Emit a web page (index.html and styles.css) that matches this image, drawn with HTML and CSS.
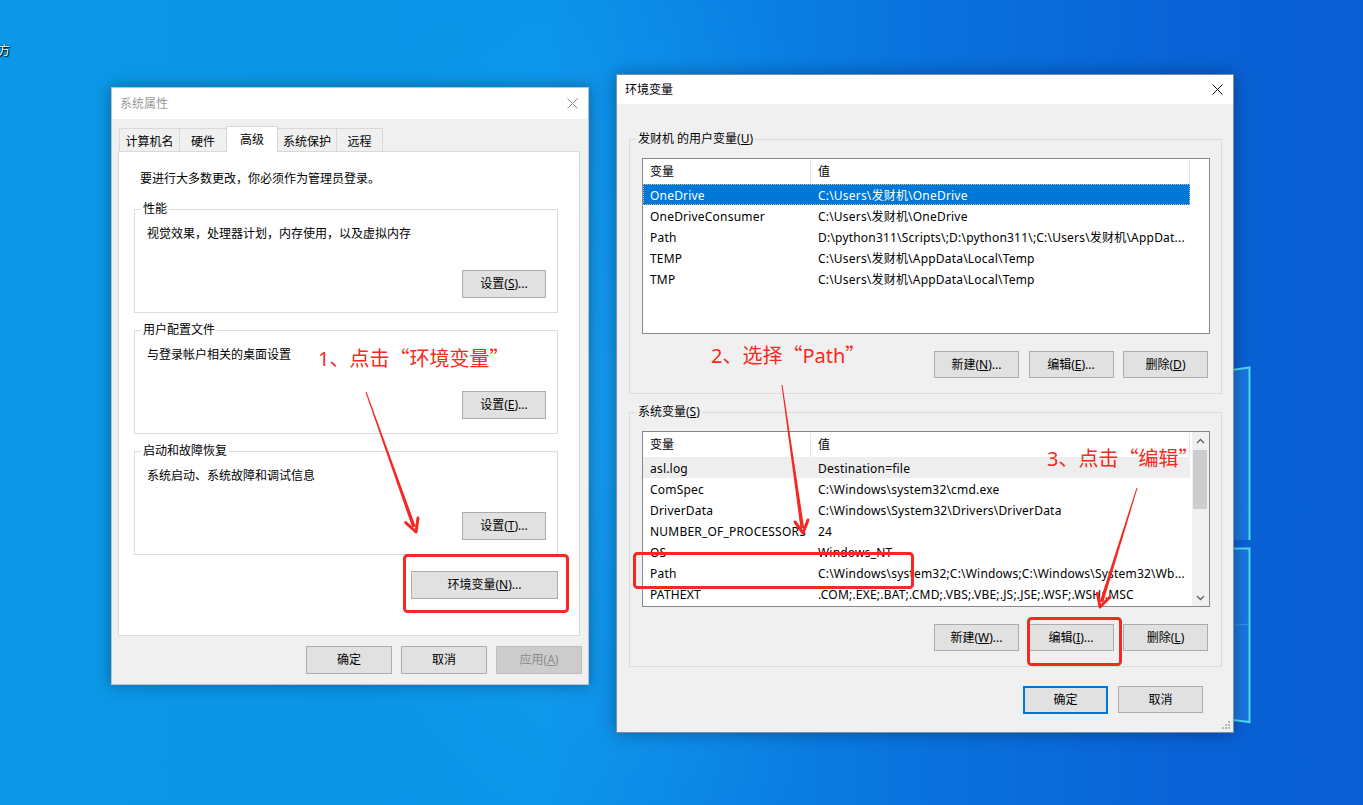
FILE: index.html
```html
<!DOCTYPE html>
<html lang="zh-CN">
<head>
<meta charset="utf-8">
<title>环境变量</title>
<link rel="stylesheet" href="styles.css">
</head>
<body>
<div class="desk-icon">方</div>

<svg class="logo" width="40" height="380" viewBox="1225 360 40 380">
  <polygon points="1225,371 1250,367 1250,540 1225,540" fill="rgba(70,175,250,0.28)"/>
  <polygon points="1225,548 1250,548 1250,722 1225,719" fill="rgba(70,175,250,0.28)"/>
  <polyline points="1225,371 1249.5,367.5 1249.5,540" fill="none" stroke="#52d8f4" stroke-width="2"/>
  <polyline points="1225,548.5 1249.5,548.5 1249.5,722 1225,719" fill="none" stroke="#52d8f4" stroke-width="2"/>
  <line x1="1225" y1="626" x2="1249" y2="624" stroke="rgba(120,220,255,0.35)" stroke-width="1"/>
</svg>

<!-- 系统属性 -->
<div class="win win-sys">
  <div class="titlebar inactive">
    <span class="title">系统属性</span>
    <svg class="close" width="11" height="11" viewBox="0 0 11 11"><path d="M0.5 0.5 L10.5 10.5 M10.5 0.5 L0.5 10.5" stroke="#8a8a8a" stroke-width="1"/></svg>
  </div>
  <div class="sys-body">
    <div class="tabs">
      <div class="tab t1">计算机名</div>
      <div class="tab t2">硬件</div>
      <div class="tab t3 active">高级</div>
      <div class="tab t4">系统保护</div>
      <div class="tab t5">远程</div>
    </div>
    <div class="panel">
      <p class="intro">要进行大多数更改，你必须作为管理员登录。</p>
      <fieldset class="group g-sys">
        <legend>性能</legend>
        <div class="gbody">
          <p class="desc">视觉效果，处理器计划，内存使用，以及虚拟内存</p>
          <div class="brow"><button class="btn">设置(<u>S</u>)...</button></div>
        </div>
      </fieldset>
      <fieldset class="group g-sys">
        <legend>用户配置文件</legend>
        <div class="gbody">
          <p class="desc">与登录帐户相关的桌面设置</p>
          <div class="brow"><button class="btn">设置(<u>E</u>)...</button></div>
        </div>
      </fieldset>
      <fieldset class="group g-sys">
        <legend>启动和故障恢复</legend>
        <div class="gbody">
          <p class="desc">系统启动、系统故障和调试信息</p>
          <div class="brow"><button class="btn">设置(<u>T</u>)...</button></div>
        </div>
      </fieldset>
      <div class="env-row"><button class="btn btn-env">环境变量(<u>N</u>)...</button></div>
    </div>
    <div class="footer sys-footer">
      <button class="btn">确定</button>
      <button class="btn">取消</button>
      <button class="btn disabled">应用(<u>A</u>)</button>
    </div>
  </div>
</div>

<!-- 环境变量 -->
<div class="win win-env">
  <div class="titlebar">
    <span class="title">环境变量</span>
    <svg class="close" width="11" height="11" viewBox="0 0 11 11"><path d="M0.5 0.5 L10.5 10.5 M10.5 0.5 L0.5 10.5" stroke="#111" stroke-width="1"/></svg>
  </div>
  <div class="env-body">
    <fieldset class="group g-env">
      <legend>发财机 的用户变量(<u>U</u>)</legend>
      <div class="gbody2">
        <div class="listbox">
          <div class="lv">
            <div class="lv-head"><div class="c1">变量</div><div class="c2">值</div></div>
            <div class="lv-row selected"><div class="c1">OneDrive</div><div class="c2">C:\Users\发财机\OneDrive</div></div>
            <div class="lv-row"><div class="c1">OneDriveConsumer</div><div class="c2">C:\Users\发财机\OneDrive</div></div>
            <div class="lv-row"><div class="c1">Path</div><div class="c2">D:\python311\Scripts\;D:\python311\;C:\Users\发财机\AppDat...</div></div>
            <div class="lv-row"><div class="c1">TEMP</div><div class="c2">C:\Users\发财机\AppData\Local\Temp</div></div>
            <div class="lv-row"><div class="c1">TMP</div><div class="c2">C:\Users\发财机\AppData\Local\Temp</div></div>
          </div>
        </div>
        <div class="btn-row">
          <button class="btn">新建(<u>N</u>)...</button>
          <button class="btn">编辑(<u>E</u>)...</button>
          <button class="btn">删除(<u>D</u>)</button>
        </div>
      </div>
    </fieldset>
    <fieldset class="group g-env g-env2">
      <legend>系统变量(<u>S</u>)</legend>
      <div class="gbody2">
        <div class="listbox">
          <div class="lv">
            <div class="lv-head"><div class="c1">变量</div><div class="c2">值</div></div>
            <div class="lv-row hot"><div class="c1">asl.log</div><div class="c2">Destination=file</div></div>
            <div class="lv-row"><div class="c1">ComSpec</div><div class="c2">C:\Windows\system32\cmd.exe</div></div>
            <div class="lv-row"><div class="c1">DriverData</div><div class="c2">C:\Windows\System32\Drivers\DriverData</div></div>
            <div class="lv-row"><div class="c1">NUMBER_OF_PROCESSORS</div><div class="c2">24</div></div>
            <div class="lv-row"><div class="c1">OS</div><div class="c2">Windows_NT</div></div>
            <div class="lv-row"><div class="c1">Path</div><div class="c2">C:\Windows\system32;C:\Windows;C:\Windows\System32\Wb...</div></div>
            <div class="lv-row"><div class="c1">PATHEXT</div><div class="c2">.COM;.EXE;.BAT;.CMD;.VBS;.VBE;.JS;.JSE;.WSF;.WSH;.MSC</div></div>
          </div>
          <div class="sb">
            <div class="sb-btn"><svg width="9" height="6" viewBox="0 0 9 6"><path d="M1 5 L4.5 1.5 L8 5" fill="none" stroke="#606060" stroke-width="1.3"/></svg></div>
            <div class="sb-track"><div class="sb-thumb"></div></div>
            <div class="sb-btn"><svg width="9" height="6" viewBox="0 0 9 6"><path d="M1 1 L4.5 4.5 L8 1" fill="none" stroke="#606060" stroke-width="1.3"/></svg></div>
          </div>
        </div>
        <div class="btn-row">
          <button class="btn">新建(<u>W</u>)...</button>
          <button class="btn">编辑(<u>I</u>)...</button>
          <button class="btn">删除(<u>L</u>)</button>
        </div>
      </div>
    </fieldset>
    <div class="footer env-footer">
      <button class="btn default">确定</button>
      <button class="btn">取消</button>
    </div>
  </div>
  <svg class="grip" width="10" height="10" viewBox="0 0 10 10" fill="#b5b5b5">
    <rect x="7" y="1" width="2" height="2"/><rect x="4" y="4" width="2" height="2"/><rect x="7" y="4" width="2" height="2"/>
    <rect x="1" y="7" width="2" height="2"/><rect x="4" y="7" width="2" height="2"/><rect x="7" y="7" width="2" height="2"/>
  </svg>
</div>

<!-- annotations -->
<svg class="annot" width="1363" height="805" viewBox="0 0 1363 805">
  <g fill="#f42a22" stroke="none">
    <polygon points="365.5,392.2 366.5,391.8 415.7,526.4 412.3,527.6"/>
    <polygon points="781.5,385.1 782.5,384.9 804.1,527.7 800.5,528.3"/>
    <polygon points="1136.5,487.9 1137.5,488.1 1103.2,602.5 1099.8,601.5"/>
  </g>
  <g fill="none" stroke="#f42a22" stroke-width="3" stroke-linecap="round" stroke-linejoin="round">
    <polyline points="405.7,522.6 416,532 418,518"/>
    <polyline points="795,522 803,533 808,520"/>
    <polyline points="1097.4,593.3 1100,607 1110,597"/>
    <rect x="404.5" y="555.5" width="163" height="56" rx="3"/>
    <rect x="634.5" y="553.5" width="278" height="34" rx="3"/>
    <rect x="1028.5" y="618.5" width="92" height="46" rx="3"/>
  </g>
</svg>
<div class="note note1"><span class="lat">1</span>、点击“环境变量”</div>
<div class="note note2"><span class="lat">2</span>、选择“<span class="lat">Path</span>”</div>
<div class="note note3"><span class="lat">3</span>、点击“编辑”</div>
</body>
</html>
```

FILE: styles.css
```css
* { box-sizing: border-box; }

html, body {
  margin: 0;
  padding: 0;
}

body {
  position: relative;
  width: 1363px;
  height: 805px;
  overflow: hidden;
  font-family: "Noto Sans", "Noto Sans CJK SC", sans-serif;
  font-size: 12px;
  color: #000;
  background:
    radial-gradient(ellipse 420px 700px at 600px 420px, rgba(40,180,255,0.35), rgba(40,180,255,0) 70%),
    linear-gradient(90deg, #0b98e6 0%, #0a93e8 40%, #0a86e6 50%, #0970dc 70%, #0962d6 88%, #095ed3 100%);
}

p { margin: 0; }

.desk-icon {
  position: absolute;
  left: -2px;
  top: 43px;
  color: #fff;
  font-size: 12px;
  line-height: 16px;
  text-shadow: 0 0 2px #000, 1px 1px 1px #000;
}

.logo {
  position: absolute;
  left: 1225px;
  top: 360px;
}

/* windows */
.win {
  position: absolute;
  display: flex;
  flex-direction: column;
  background: #f0f0f0;
}

.win-sys {
  left: 111px;
  top: 87px;
  width: 478px;
  height: 598px;
  border: 1px solid rgba(90, 110, 130, 0.35);
  box-shadow: 0 0 14px rgba(0, 0, 0, 0.35);
}

.win-env {
  left: 616px;
  top: 74px;
  width: 618px;
  height: 659px;
  border: 1px solid #7b8fa6;
  box-shadow: 0 0 16px rgba(0, 0, 0, 0.35);
}

.titlebar {
  flex: none;
  display: flex;
  align-items: center;
  justify-content: space-between;
  background: #fff;
  padding: 0 10px 0 8px;
  line-height: 16px;
}

.win-sys .titlebar { height: 31px; }
.win-env .titlebar { height: 29px; padding-right: 10px; }

.titlebar.inactive .title { color: #9a9a9a; }

.close { display: block; }

/* buttons */
.btn {
  font-family: "Noto Sans", "Noto Sans CJK SC", sans-serif;
  font-size: 12px;
  color: #000;
  background: #e1e1e1;
  border: 1px solid #adadad;
  height: 27px;
  width: 85px;
  padding: 0;
  line-height: 16px;
  white-space: nowrap;
}

.btn.disabled {
  background: #cccccc;
  border-color: #bfbfbf;
  color: #8a8a8a;
}

.btn.default {
  border: 2px solid #0078d7;
  height: 28px;
}

/* 系统属性 body */
.sys-body {
  flex: 1;
  display: flex;
  flex-direction: column;
  padding: 9px 8px 0 6px;
}

.tabs {
  display: flex;
  align-items: flex-end;
  height: 23px;
  padding-left: 1px;
}

.tab {
  height: 23px;
  border: 1px solid #d9d9d9;
  border-bottom: none;
  background: #f0f0f0;
  text-align: center;
  padding-top: 2px;
  line-height: 22px;
  white-space: nowrap;
}

.tab + .tab { margin-left: -1px; }

.t1 { width: 61px; }
.t2 { width: 48px; }
.t3 { width: 52px; }
.t4 { width: 60px; }
.t5 { width: 47px; }

.tab.active {
  position: relative;
  z-index: 1;
  height: 26px;
  margin-bottom: -1px;
  background: #fff;
  line-height: 22px;
}

.panel {
  height: 485px;
  background: #fff;
  border: 1px solid #d9d9d9;
  padding: 19px 21px 0 15px;
}

.intro {
  line-height: 16px;
  margin-left: 6px;
  margin-bottom: 14px;
}

.group {
  margin: 0;
  padding: 0;
  border: 1px solid #dcdcdc;
  min-width: 0;
}

.group legend {
  margin-left: 6px;
  padding: 0 2px;
  line-height: 16px;
  font-size: 12px;
}

.g-sys + .g-sys { margin-top: 9px; }

.gbody {
  height: 95px;
  display: flex;
  flex-direction: column;
  padding: 9px 11px 14px 12px;
}

.desc { line-height: 16px; }

.brow {
  margin-top: auto;
  display: flex;
  justify-content: flex-end;
}

.brow .btn { width: 84px; height: 28px; }

.env-row {
  display: flex;
  justify-content: flex-end;
  margin-top: 16px;
}

.btn-env { width: 147px; height: 28px; }

.footer {
  display: flex;
  justify-content: flex-end;
}

.sys-footer {
  margin-top: 10px;
  margin-right: -2px;
  gap: 9px;
}

.sys-footer .btn { width: 86px; height: 28px; }

/* 环境变量 body */
.env-body {
  flex: 1;
  display: flex;
  flex-direction: column;
  padding: 27px 11px 0 12px;
}

.g-env2 { margin-top: 10px; }

.gbody2 {
  padding: 11px 11px 16px 12px;
}

.listbox {
  height: 176px;
  border: 1px solid #828790;
  background: #fff;
  display: flex;
  overflow: hidden;
}

.lv {
  flex: 1;
  min-width: 0;
  overflow: hidden;
}

.lv-head,
.lv-row {
  display: flex;
  width: 547px;
  white-space: nowrap;
}

.lv-head {
  height: 25px;
  padding-top: 1px;
  line-height: 24px;
}

.lv-head .c1,
.lv-head .c2 {
  border-right: 1px solid #e5e5e5;
}

.lv-row {
  height: 21px;
  padding-top: 1px;
  line-height: 21px;
  letter-spacing: 0.2px;
}

.c1 {
  width: 168px;
  flex: none;
  padding-left: 7px;
  overflow: hidden;
}

.c2 {
  flex: 1;
  padding-left: 7px;
  overflow: hidden;
}

.lv-row.selected {
  background: #0078d7;
  color: #fff;
  outline: 1px dotted rgba(255, 210, 150, 0.8);
  outline-offset: -1px;
}

.lv-row.hot { background: #eeeeee; }

.sb {
  width: 17px;
  flex: none;
  margin-left: 1px;
  background: #f0f0f0;
  display: flex;
  flex-direction: column;
}

.sb-btn {
  height: 17px;
  display: flex;
  align-items: center;
  justify-content: center;
}

.sb-track {
  flex: 1;
  padding: 1px 2px 0 1px;
}

.sb-thumb {
  height: 59px;
  background: #cdcdcd;
}

.btn-row {
  display: flex;
  justify-content: flex-end;
  gap: 9.5px;
  margin-top: 17px;
  margin-bottom: -1px;
  padding-right: 2px;
}

.env-footer {
  margin-top: 19px;
  gap: 10px;
  padding-right: 19px;
}

.grip {
  position: absolute;
  right: 2px;
  bottom: 2px;
}

/* annotations */
.annot {
  position: absolute;
  left: 0;
  top: 0;
  pointer-events: none;
}

.note {
  position: absolute;
  font-family: "Noto Sans CJK SC", sans-serif;
  font-size: 20px;
  line-height: 20px;
  color: #f42a22;
  white-space: nowrap;
}

.note .lat { font-family: "Noto Sans", sans-serif; }

.note1 { left: 318px; top: 348px; }
.note2 { left: 711px; top: 345px; }
.note3 { left: 1047px; top: 448px; }
```
